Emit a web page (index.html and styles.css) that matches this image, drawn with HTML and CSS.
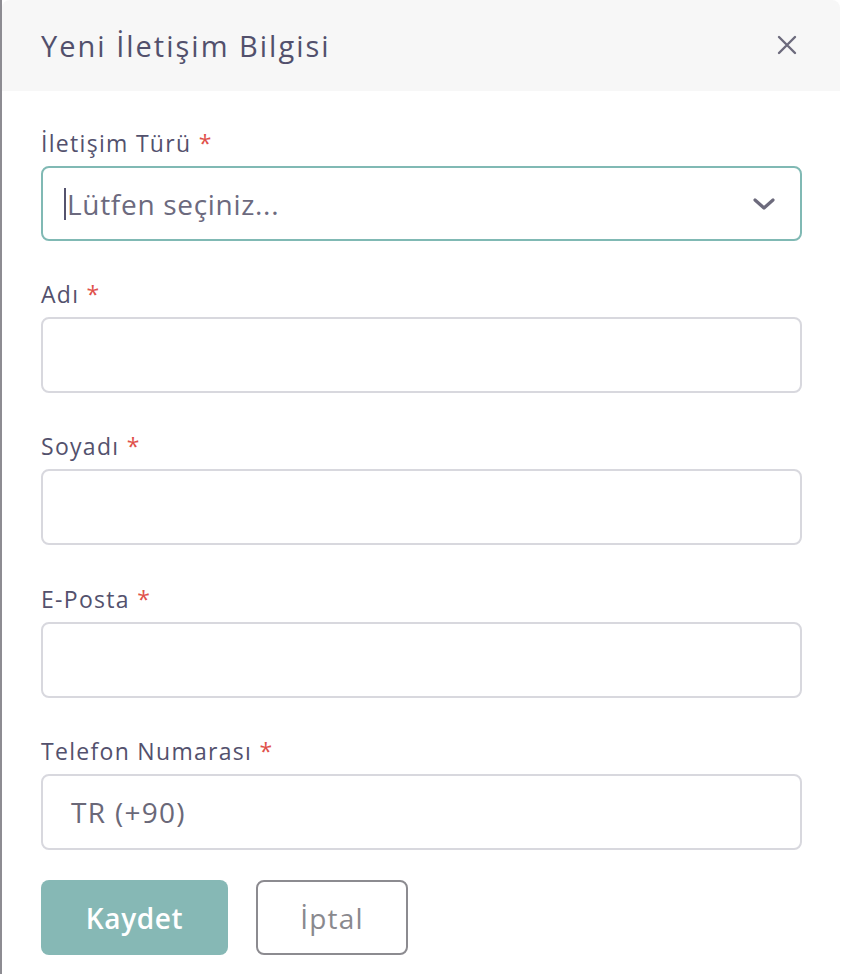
FILE: index.html
```html
<!DOCTYPE html>
<html lang="tr">
<head>
<meta charset="utf-8">
<title>Yeni İletişim Bilgisi</title>
<link rel="stylesheet" href="styles.css">
</head>
<body>
<div class="page">
  <div class="backdrop"></div>
  <div class="modal">
    <div class="modal-header">
      <h1 class="modal-title">Yeni İletişim Bilgisi</h1>
      <button class="close-btn" aria-label="Kapat">
        <svg width="20" height="20" viewBox="0 0 20 20"><path d="M2 2 L18 18 M18 2 L2 18" stroke="#6c6a7c" stroke-width="2.4" stroke-linecap="round" fill="none"/></svg>
      </button>
    </div>
    <div class="modal-body">
      <div class="field">
        <label class="label">İletişim Türü <span class="req">*</span></label>
        <div class="control select">
          <span class="caret"></span><span class="placeholder">Lütfen seçiniz...</span>
          <svg class="chevron" width="24" height="14" viewBox="0 0 24 14"><path d="M3 3 L12 11 L21 3" stroke="#6c6a7c" stroke-width="3.2" stroke-linecap="round" stroke-linejoin="round" fill="none"/></svg>
        </div>
      </div>
      <div class="field">
        <label class="label">Adı <span class="req">*</span></label>
        <div class="control"></div>
      </div>
      <div class="field">
        <label class="label">Soyadı <span class="req">*</span></label>
        <div class="control"></div>
      </div>
      <div class="field">
        <label class="label">E-Posta <span class="req">*</span></label>
        <div class="control"></div>
      </div>
      <div class="field last">
        <label class="label">Telefon Numarası <span class="req">*</span></label>
        <div class="control phone"><span class="value">TR (+90)</span></div>
      </div>
      <div class="actions">
        <button class="btn btn-primary">Kaydet</button>
        <button class="btn btn-outline">İptal</button>
      </div>
    </div>
  </div>
</div>
</body>
</html>
```
FILE: styles.css
```css
* { box-sizing: border-box; }
html, body { margin: 0; padding: 0; }
body {
  background: #ffffff;
  font-family: "Open Sans", "Noto Sans", "DejaVu Sans", sans-serif;
  color: #53516d;
}
.page {
  display: flex;
  height: 974px;
  overflow: hidden;
}
.backdrop {
  width: 2px;
  flex: none;
  background: #8d8c92;
}
.modal {
  width: 838px;
  flex: none;
  background: #ffffff;
  border-radius: 8px 8px 0 0;
}
.modal-header {
  height: 91px;
  background: #f7f7f7;
  border-radius: 8px 8px 0 0;
  display: flex;
  align-items: center;
  justify-content: space-between;
  padding: 0 43px 0 39px;
}
.modal-title {
  margin: 0;
  font-size: 29px;
  line-height: 36px;
  font-weight: 500;
  color: #52506c;
  letter-spacing: 2px;
}
.close-btn {
  background: none;
  border: 0;
  padding: 0;
  width: 20px;
  height: 20px;
  display: flex;
  margin-top: -2px;
}
.modal-body {
  padding: 39px 38px 0 39px;
}
.field {
  display: flex;
  flex-direction: column;
  gap: 10px;
  margin-bottom: 40px;
}
.field:nth-child(3) { margin-bottom: 41px; }
.field.last { margin-bottom: 30px; }
.label {
  font-size: 23px;
  line-height: 26px;
  color: #53516d;
  letter-spacing: 1.3px;
}
.req { color: #e0514b; }
.control {
  height: 76px;
  border: 2px solid #d8d8de;
  border-radius: 8px;
  display: flex;
  align-items: center;
  padding: 0 28px;
}
.control.select {
  border-color: #80b9b4;
  padding: 0 24px 0 21px;
  height: 75px;
}
.caret {
  width: 2px;
  height: 32px;
  background: #55536e;
  flex: none;
  margin-right: 1px;
}
.placeholder {
  flex: 1;
  font-size: 28px;
  color: #6c6a7e;
  letter-spacing: 0.7px;
}
.chevron { flex: none; }
.phone .value {
  font-size: 28px;
  color: #6a6878;
  letter-spacing: 1.3px;
}
.actions {
  display: flex;
  gap: 28px;
}
.btn {
  height: 75px;
  border-radius: 8px;
  font-family: inherit;
  font-size: 28px;
  font-weight: 600;
  display: flex;
  align-items: center;
  justify-content: center;
  padding: 0;
  letter-spacing: 0.6px;
}
.btn-primary {
  width: 187px;
  background: #86b8b5;
  border: 0;
  color: #ffffff;
}
.btn-outline {
  width: 152px;
  background: #ffffff;
  border: 2px solid #8c8b90;
  color: #8a898e;
  font-weight: 500;
  letter-spacing: 1.2px;
}
```
